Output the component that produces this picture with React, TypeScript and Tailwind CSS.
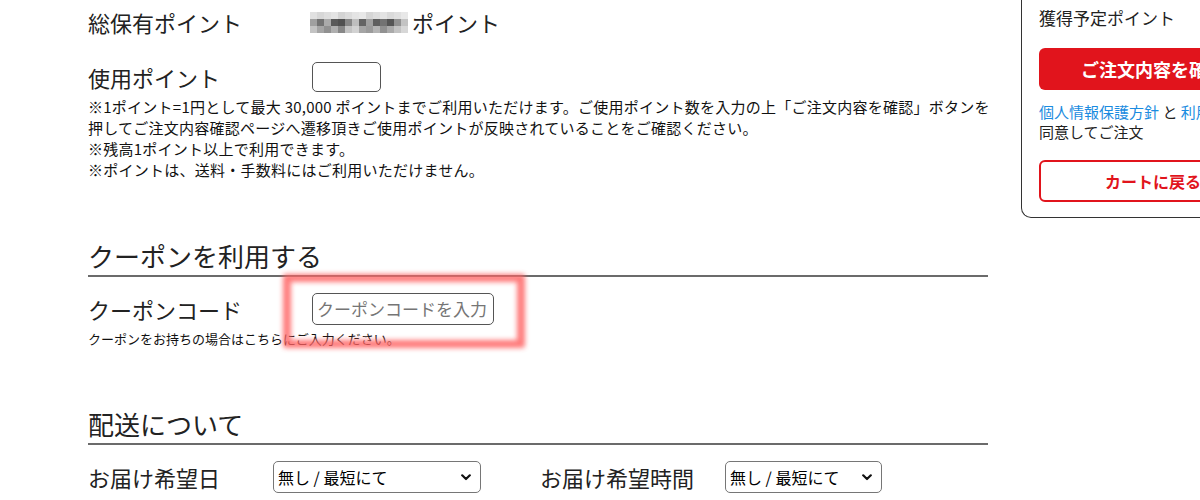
import React from "react";

const font = { fontFamily: '"Noto Sans CJK JP", "Noto Sans", sans-serif' };

// mosaic used to hide the balance in the screenshot
const mosaic = [
  [225, 215, 222, 228, 212, 220, 228, 232, 214, 222, 228, 218, 224, 232],
  [160, 115, 170, 90, 80, 135, 190, 100, 160, 95, 115, 85, 145, 195],
  [195, 165, 145, 175, 135, 195, 210, 165, 155, 180, 145, 170, 195, 215],
];

function Mosaic() {
  return (
    <div className="flex flex-col">
      {mosaic.map((row, i) => (
        <div key={i} className="flex">
          {row.map((g, j) => (
            <div key={j} className="h-[7px] w-[7px]" style={{ backgroundColor: `rgb(${g},${g},${g})` }} />
          ))}
        </div>
      ))}
    </div>
  );
}

function Chevron() {
  return (
    <svg width="10" height="7" viewBox="0 0 10 7" className="shrink-0">
      <path d="M1.2 1.3 L5 5 L8.8 1.3" fill="none" stroke="#111" strokeWidth="2.2" strokeLinecap="round" strokeLinejoin="round" />
    </svg>
  );
}

function FakeSelect({ width }: { width: string }) {
  return (
    <div className={`flex h-[32px] ${width} items-center justify-between rounded-[5px] border border-[#767676] pl-[4px] pr-[9px] text-[16px] text-black`}>
      <span>無し / 最短にて</span>
      <Chevron />
    </div>
  );
}

function SectionTitle({ children }: { children: React.ReactNode }) {
  return (
    <div className="border-b-2 border-[#6b6b6b] pb-[3px] text-[26px] leading-[32px] text-[#222]">{children}</div>
  );
}

export default function App() {
  return (
    <div className="h-[500px] w-[1200px] overflow-hidden bg-white text-[#222]" style={font}>
      <div className="flex pl-[88px]">
        <div className="flex w-[900px] shrink-0 flex-col">
          <div className="mt-[6px] flex h-[32px] items-center">
            <div className="w-[222px] text-[22px] leading-none">総保有ポイント</div>
            <div className="flex items-center">
              <Mosaic />
              <span className="ml-[4px] text-[22px] leading-none">ポイント</span>
            </div>
          </div>
          <div className="mt-[24px] flex h-[30px] items-center">
            <div className="w-[224px] text-[22px] leading-none">使用ポイント</div>
            <div className="h-[30px] w-[69px] rounded-[5px] border border-[#555]" />
          </div>
          <div className="mt-[4px] whitespace-nowrap text-[15px] leading-[21px] tracking-[0.25px] text-[#111]">
            ※1ポイント=1円として最大 30,000 ポイントまでご利用いただけます。ご使用ポイント数を入力の上「ご注文内容を確認」ボタンを
            <br />
            押してご注文内容確認ページへ遷移頂きご使用ポイントが反映されていることをご確認ください。
            <br />
            ※残高1ポイント以上で利用できます。
            <br />
            ※ポイントは、送料・手数料にはご利用いただけません。
          </div>

          <div className="mt-[60px]">
            <SectionTitle>クーポンを利用する</SectionTitle>
          </div>
          <div className="relative">
            <div className="mt-[16px] flex h-[32px] items-center">
              <div className="w-[224px] text-[22px] leading-none">クーポンコード</div>
              <div className="flex h-[32px] w-[182px] items-center rounded-[5px] border border-[#555] px-[4px] text-[17px] text-[#757575]">
                クーポンコードを入力
              </div>
            </div>
            <div className="mt-[6px] text-[13px] leading-[16px] text-[#111]">
              クーポンをお持ちの場合はこちらにご入力ください。
            </div>
            <div className="pointer-events-none absolute left-[195px] top-[-3px] h-[74px] w-[242px] rounded-[3px] border-[8px] border-[#ff6464] opacity-85 blur-[2.5px]" />
          </div>

          <div className="mt-[61px]">
            <SectionTitle>配送について</SectionTitle>
          </div>
          <div className="mt-[16px] flex h-[32px] items-center">
            <div className="w-[185px] text-[22px] leading-none">お届け希望日</div>
            <FakeSelect width="w-[208px]" />
            <div className="ml-[59px] w-[185px] text-[22px] leading-none">お届け希望時間</div>
            <FakeSelect width="w-[157px]" />
          </div>
        </div>

        <div className="ml-[33px] h-[218px] w-[240px] shrink-0 rounded-bl-[10px] border-b border-l border-[#333] pl-[17px]">
          <div className="mt-[7px] text-[17px] leading-[22px] text-[#222]">獲得予定ポイント</div>
          <div className="mt-[19px] flex h-[42px] w-[228px] items-center justify-center rounded-[6px] bg-[#e1141c] text-[18px] font-bold text-white">
            ご注文内容を確認
          </div>
          <div className="mt-[12px] whitespace-nowrap text-[15px] leading-[20px]">
            <span className="text-[#1a8be0]">個人情報保護方針</span>
            <span className="text-[#222]"> と </span>
            <span className="text-[#1a8be0]">利用規約</span>
            <span className="text-[#222]">に</span>
            <br />
            <span className="text-[#222]">同意してご注文</span>
          </div>
          <div className="mt-[18px] flex h-[42px] w-[228px] items-center justify-center rounded-[6px] border-2 border-[#e1141c] text-[16px] font-bold text-[#e1141c]">
            カートに戻る
          </div>
        </div>
      </div>
    </div>
  );
}
